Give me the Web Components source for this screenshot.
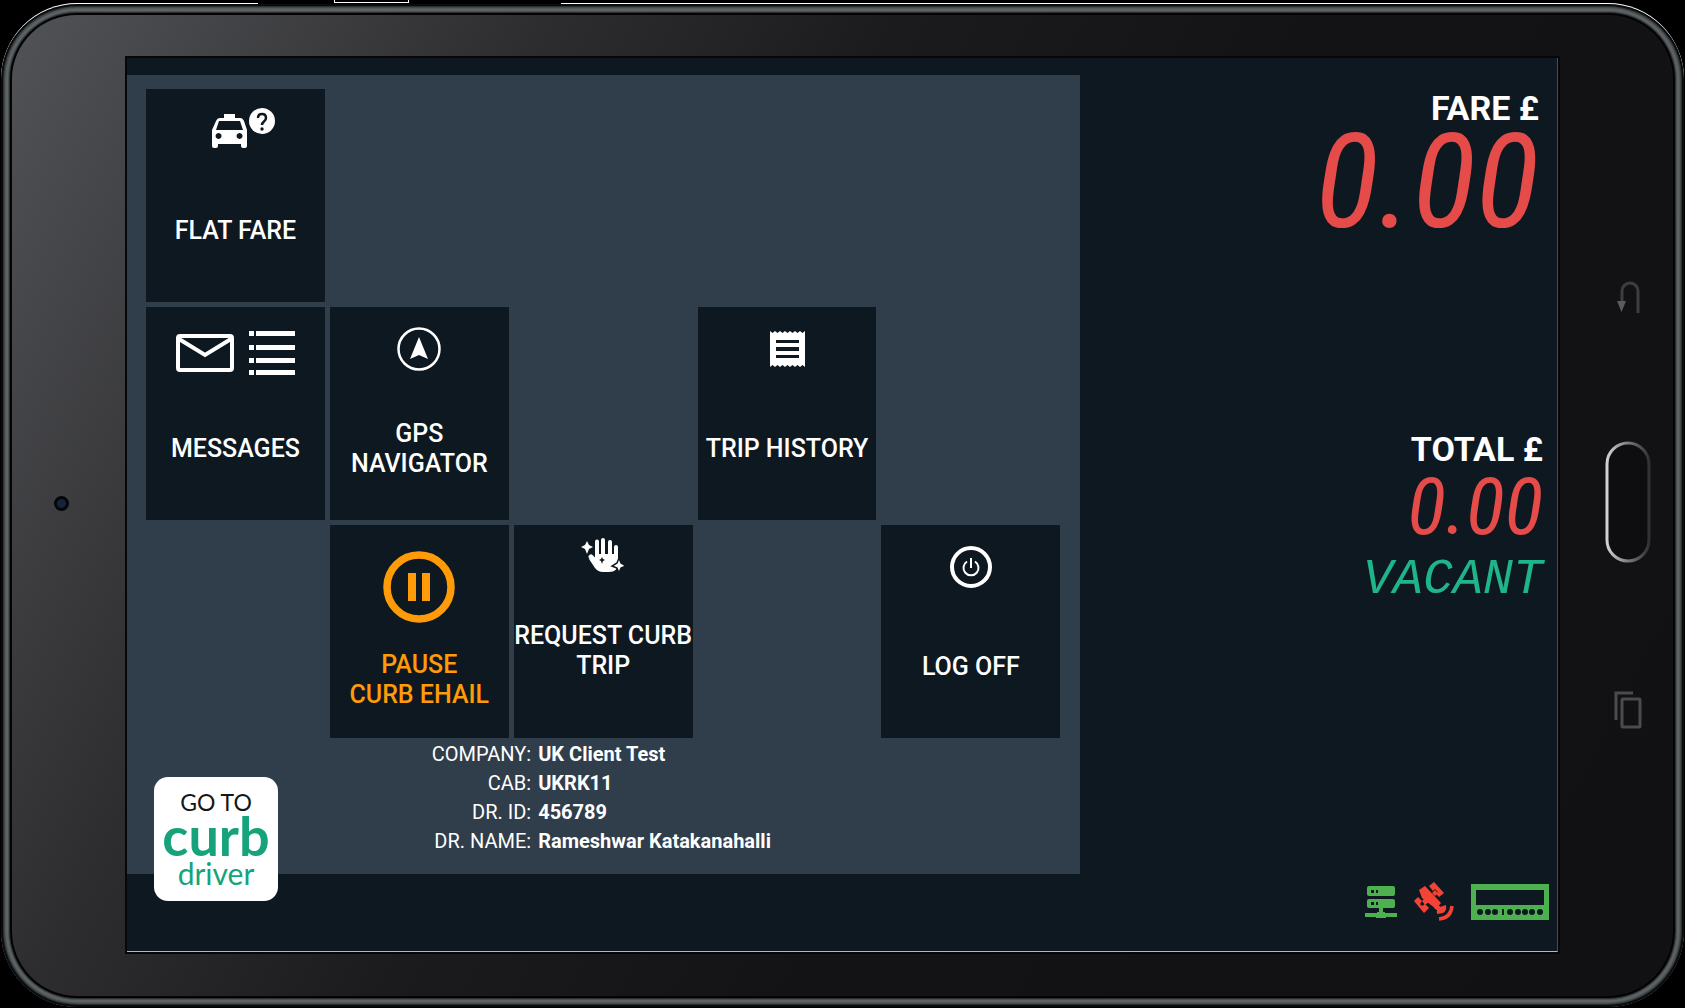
<!DOCTYPE html>
<html lang="en">
<head>
<meta charset="UTF-8">
<meta name="viewport" content="width=device-width, initial-scale=1.0">
<title>Curb Driver Tablet</title>
<style>
    body {
        margin: 0;
        background: #000;
        color: #fff;
        font-family: Roboto, "Open Sans", sans-serif;
    }
</style>
</head>
<body>
<tablet-device>
    <driver-menu slot="menu">
        <menu-tile style="grid-area: 1 / 1">
            <svg slot="icon" width="82" height="46" viewBox="-18 0 82 46">
                <path fill="#fff" fill-rule="evenodd" d="M12 6h11v4h5c2 0 3 1 4 3l3 9v16q0 2-2 2h-2q-2 0-2-2v-2H6v2q0 2-2 2H2q-2 0-2-2V22l4-9c1-2 2-3 4-3h4zM7 13L4 22h27l-3-9zM6.500 25a3 3 0 1 0 .1 0zM27.500 25a3 3 0 1 0 .1 0z"/>
                <circle cx="50" cy="13" r="13" fill="#fff"/>
                <path d="M46 10q0-4 4-4t4 4q0 2-2 3.500t-2 3.500" fill="none" stroke="#0e1821" stroke-width="2.500"/>
                <circle cx="50" cy="21" r="1.700" fill="#0e1821"/>
            </svg>
            FLAT FARE
        </menu-tile>
        <menu-tile style="grid-area: 2 / 1" class="tall">
            <svg slot="icon" width="119" height="46" viewBox="0 0 119 46">
                <rect x="2" y="5" width="54" height="34" rx="2" fill="none" stroke="#fff" stroke-width="4"/>
                <path d="M3 8l26 16L55 8" fill="none" stroke="#fff" stroke-width="4"/>
                <path fill="#fff" d="M73 0h5v5h-5zM80 0h39v5H80zM73 14h5v5h-5zM80 14h39v5H80zM73 27h5v5h-5zM80 27h39v5H80zM73 39h5v5h-5zM80 39h39v5H80z"/>
            </svg>
            MESSAGES
        </menu-tile>
        <menu-tile style="grid-area: 2 / 2">
            <svg slot="icon" width="44" height="44" viewBox="0 0 44 44">
                <circle cx="22" cy="22" r="20.500" fill="none" stroke="#fff" stroke-width="2.500"/>
                <path fill="#fff" d="M22 10l9 22-9-4-9 4z"/>
            </svg>
            GPS<br>NAVIGATOR
        </menu-tile>
        <menu-tile style="grid-area: 2 / 4">
            <svg slot="icon" width="35" height="38" viewBox="0 0 35 38">
                <path fill="#fff" fill-rule="evenodd" d="M0 1l2.500 2L5 1l2.500 2L10 1l2.500 2L15 1l2.500 2L20 1l2.500 2L25 1l2.500 2L30 1l2.500 2L35 1v36l-2.500-2-2.500 2-2.500-2-2.500 2-2.500-2-2.500 2-2.500-2-2.500 2-2.500-2-2.500 2-2.500-2L5 37l-2.500-2L0 37zM6 10v3h23v-3zM6 17v4h23v-4zM6 25v3h23v-3z"/>
            </svg>
            TRIP HISTORY
        </menu-tile>
        <menu-tile style="grid-area: 3 / 2" class="pause">
            <svg slot="icon" width="72" height="72" viewBox="0 0 72 72">
                <circle cx="36" cy="36" r="32" fill="none" stroke="#ff9a08" stroke-width="7.500"/>
                <path fill="#ff9a08" d="M25 22h8v28h-8zM39 22h8v28h-8z"/>
            </svg>
            PAUSE<br>CURB EHAIL
        </menu-tile>
        <menu-tile style="grid-area: 3 / 3" class="request">
            <svg slot="icon" width="44" height="36" viewBox="0 0 44 36">
                <g fill="none" stroke="#fff" stroke-width="4" stroke-linecap="round">
                    <path d="M16 20V4.500M22 18V3M29 18V5M35 20V10"/>
                    <path d="M10 20l7 7" stroke-width="5"/>
                </g>
                <path fill="#fff" d="M14 17h23v9q0 9-9 9h-6q-5 0-8-4l-6-9 6 1z"/>
                <path fill="#fff" d="M6 4l2 4 4 2-4 2-2 5-2-5-4-2 4-2z"/>
                <path fill="#fff" stroke="#0e1821" stroke-width="1.500" d="M38 21l2 5 5 3-5 2-2 5-2-5-5-2 5-3z"/>
                <path fill="#0e1821" d="M21 20l1 2 2 1-2 1-1 3-1-3-2-1 2-1z"/>
            </svg>
            REQUEST CURB<br>TRIP
        </menu-tile>
        <menu-tile style="grid-area: 3 / 5">
            <svg slot="icon" width="42" height="42" viewBox="0 0 42 42" fill="none" stroke="#fff">
                <circle cx="21" cy="21" r="19" stroke-width="4"/>
                <path d="M17 15.500a7.500 7.500 0 1 0 8 0" stroke-width="2"/>
                <path d="M21 12v10" stroke-width="2"/>
            </svg>
            LOG OFF
        </menu-tile>
        <driver-info slot="info"></driver-info>
    </driver-menu>
    <fare-meter slot="meter"></fare-meter>
    <curb-link slot="overlay"></curb-link>
</tablet-device>

<script>
class TabletDevice extends HTMLElement {
    connectedCallback() {
        this.attachShadow({ mode: 'open' });
        this.shadowRoot.innerHTML = `
            <style>
                :host {
                    display: block;
                    position: relative;
                    box-sizing: border-box;
                    min-height: 100vh;
                    padding: 3px 1px 1px;
                }
                /* power and volume keys on the top edge */
                .keys {
                    position: absolute;
                    top: 0;
                    left: 15.3%;
                    width: 18%;
                    height: 4px;
                    display: grid;
                    grid-template-columns: 25% 25% 50%;
                    background: #000;
                }
                .keys span:nth-child(2) {
                    height: 2px;
                    border: 1px solid #fff;
                    border-top: 0;
                }
                .body {
                    box-sizing: border-box;
                    min-height: calc(100vh - 4px);
                    display: grid;
                    grid-template-columns: 126px minmax(0, 1fr) 126px;
                    padding: 54px 0 55px;
                    border-radius: 76px;
                    border-top: 1px solid #fff;
                    background: linear-gradient(118deg, #535458, #2d2d2f 25%, #1b1b1d 41%, #131315 60%, #111113);
                    box-shadow:
                        inset 0 0 0 2px #0a0b0c,
                        inset 0 0 0 3px #2b2f31,
                        inset 0 0 0 4px #43484a,
                        inset 0 0 0 5px #545a5c,
                        inset 0 0 0 7px #5d6365,
                        inset 0 0 0 8px #4a4f51,
                        inset 0 0 0 9px #2b2f31,
                        inset 0 0 0 11px #030304;
                }
                .camera-side {
                    display: flex;
                    align-items: center;
                    justify-content: center;
                    padding: 0 5px 3px 0;
                }
                .camera {
                    width: 9px;
                    height: 9px;
                    border: 3px solid #05060a;
                    border-radius: 50%;
                    background: #15243a;
                }
                .screen {
                    position: relative;
                    display: grid;
                    grid-template-columns: 2fr 1fr;
                    background: #0e1821;
                    border-right: 1px solid #4a4e52;
                    border-bottom: 1px solid #b4b8ba;
                    box-shadow: 0 0 0 2px #060708;
                }
                nav {
                    display: flex;
                    flex-direction: column;
                    align-items: center;
                    justify-content: center;
                    gap: 128px;
                    padding-left: 14px;
                }
                button {
                    display: block;
                    padding: 0;
                    border: 0;
                    background: none;
                }
                svg { display: block; }
            </style>
            <div class="body">
                <div class="camera-side"><div class="camera"></div></div>
                <main class="screen">
                    <slot name="menu"></slot>
                    <slot name="meter"></slot>
                    <slot name="overlay"></slot>
                </main>
                <nav>
                    <button aria-label="Back">
                        <svg width="24" height="32" viewBox="0 0 24 32" fill="none" stroke="#46474a" stroke-width="3">
                            <path d="M6 21V10a8 8 0 0 1 16 0v22" stroke="#3d3e41"/>
                            <path d="M1 20h9L5.500 31z" fill="#5b5c60" stroke="none"/>
                        </svg>
                    </button>
                    <button aria-label="Home">
                        <svg width="46" height="122" viewBox="0 0 46 122">
                            <defs>
                                <linearGradient id="metal">
                                    <stop offset="0" stop-color="#d0d1d3"/>
                                    <stop offset=".5" stop-color="#7b7c7e"/>
                                    <stop offset="1" stop-color="#303134"/>
                                </linearGradient>
                            </defs>
                            <rect x="2" y="2" width="42" height="118" rx="21" fill="#0e0e10" stroke="url(#metal)" stroke-width="3"/>
                        </svg>
                    </button>
                    <button aria-label="Recent apps">
                        <svg width="28" height="38" viewBox="0 0 28 38" fill="none" stroke="#4a4b4e" stroke-width="3">
                            <path d="M2 29V2h17"/>
                            <rect x="8" y="8" width="18" height="28" rx="1"/>
                        </svg>
                    </button>
                </nav>
            </div>
            <div class="keys"><span></span><span></span><span></span></div>
        `;
    }
}

class DriverMenu extends HTMLElement {
    connectedCallback() {
        this.attachShadow({ mode: 'open' });
        this.shadowRoot.innerHTML = `
            <style>
                :host {
                    display: flex;
                    flex-direction: column;
                    min-width: 0;
                    margin: 17px 0 77px;
                    padding: 14px 20px 12px 19px;
                    background: #303d4a;
                }
                .tiles {
                    display: grid;
                    grid-template-columns: repeat(5, minmax(0, 1fr));
                    grid-auto-rows: 213px;
                    gap: 5px;
                }
            </style>
            <div class="tiles"><slot></slot></div>
            <slot name="info"></slot>
        `;
    }
}

class MenuTile extends HTMLElement {
    connectedCallback() {
        this.attachShadow({ mode: 'open' });
        this.shadowRoot.innerHTML = `
            <style>
                :host {
                    display: block;
                    --icon-area: 84px;
                    --icon-gap: 28px;
                }
                :host(.tall) {
                    --icon-area: 94px;
                    --icon-gap: 18px;
                }
                :host(.pause) {
                    --icon-area: 124px;
                    --icon-gap: 1px;
                    color: #ff9a08;
                }
                :host(.request) {
                    --icon-area: 60px;
                    --icon-gap: 36px;
                }
                button {
                    width: 100%;
                    height: 100%;
                    display: grid;
                    grid-template-rows: var(--icon-area) 60px;
                    row-gap: var(--icon-gap);
                    align-content: start;
                    place-items: center;
                    padding: 0;
                    border: 0;
                    background: #0e1821;
                    color: inherit;
                    font: 500 25px/30px Roboto, sans-serif;
                    white-space: nowrap;
                }
            </style>
            <button>
                <slot name="icon"></slot>
                <span><slot></slot></span>
            </button>
        `;
    }
}

class DriverInfo extends HTMLElement {
    connectedCallback() {
        this.attachShadow({ mode: 'open' });
        this.shadowRoot.innerHTML = `
            <style>
                :host { display: block; }
                dl {
                    display: grid;
                    grid-template-columns: 42% 1fr;
                    column-gap: 7px;
                    margin: 0;
                    padding: 2px 0 0 2px;
                    font-size: 20px;
                    line-height: 29px;
                }
                dt { text-align: right; }
                dd {
                    margin: 0;
                    font-weight: 700;
                }
            </style>
            <dl>
                <dt>COMPANY:</dt><dd>UK Client Test</dd>
                <dt>CAB:</dt><dd>UKRK11</dd>
                <dt>DR. ID:</dt><dd>456789</dd>
                <dt>DR. NAME:</dt><dd>Rameshwar Katakanahalli</dd>
            </dl>
        `;
    }
}

class FareMeter extends HTMLElement {
    connectedCallback() {
        this.attachShadow({ mode: 'open' });
        this.shadowRoot.innerHTML = `
            <style>
                :host {
                    display: flex;
                    flex-direction: column;
                    padding-top: 30px;
                    text-align: right;
                }
                section { padding-right: 14px; }
                .fare { padding-right: 18px; }
                .total { margin-top: 193px; }
                h2 {
                    margin: 0;
                    font-size: 34px;
                    line-height: 40px;
                    font-weight: 700;
                }
                p { margin: 0; }
                .digits {
                    color: #e54b48;
                    font-family: "Roboto Condensed", "Liberation Sans Narrow", Roboto, sans-serif;
                    font-style: italic;
                    font-size: 80px;
                    line-height: 76px;
                }
                .fare .digits {
                    font-size: 132px;
                    line-height: 108px;
                }
                .status {
                    margin-top: 11px;
                    color: #1fb489;
                    font: italic 50px/48px "Liberation Mono", monospace;
                }
                footer {
                    display: flex;
                    align-items: center;
                    justify-content: flex-end;
                    gap: 17px;
                    margin-top: auto;
                    padding: 0 8px 29px 0;
                }
            </style>
            <section class="fare">
                <h2>FARE £</h2>
                <p class="digits">0.00</p>
            </section>
            <section class="total">
                <h2>TOTAL £</h2>
                <p class="digits">0.00</p>
                <p class="status">VACANT</p>
            </section>
            <footer>
                <svg width="32" height="34" viewBox="0 0 32 34" role="img" aria-label="Server connected">
                    <rect x="2" y="1" width="28" height="10" rx="2" fill="#4db150"/>
                    <rect x="2" y="14" width="28" height="9" rx="2" fill="#4db150"/>
                    <path fill="#4db150" d="M14 23h4v4h2v1h12v4H21v1H11v-1H0v-4h12v-1h2z"/>
                    <path fill="#0e1821" d="M6 5h3v3H6zM11 5h2v3h-2zM6 17h3v3H6zM11 17h2v3h-2z"/>
                </svg>
                <svg width="40" height="40" viewBox="0 0 40 40" role="img" aria-label="No GPS signal">
                    <g fill="#f44336">
                        <path d="M5 8l6-4 16 17-5 6L8 16z"/>
                        <path d="M15 4l5-4 10 11-5 4-3-3 2-2-3-3-2 2zM0 19l4-4 4 4-2 3 2 2 3-2 4 4-5 5z"/>
                        <path d="M18 11l3-3 3 3-3 3zM8 19l4-4 4 4-5 4zM22 22l5 3-3 4-4-3z"/>
                        <path d="M23 32q-1-5 3-7l6-2q1 6-3 8z"/>
                    </g>
                    <path d="M25 37q12-1 13-13" fill="none" stroke="#f44336" stroke-width="3.500"/>
                </svg>
                <svg width="78" height="36" viewBox="0 0 78 36" role="img" aria-label="Meter connected">
                    <path fill="#4db150" fill-rule="evenodd" d="M0 0h78v36H0zM5 6v15h68V6z"/>
                    <g fill="#0e1821">
                        <circle cx="9" cy="28" r="3"/><circle cx="17" cy="28" r="3"/><circle cx="24" cy="28" r="3"/>
                        <path d="M31 25h2v6h-2z"/>
                        <circle cx="39" cy="28" r="3"/><circle cx="47" cy="28" r="3"/><circle cx="54" cy="28" r="3"/>
                        <circle cx="61" cy="28" r="3"/><circle cx="69" cy="28" r="3"/>
                    </g>
                </svg>
            </footer>
        `;
    }
}

class CurbLink extends HTMLElement {
    connectedCallback() {
        this.attachShadow({ mode: 'open' });
        this.shadowRoot.innerHTML = `
            <style>
                :host {
                    position: absolute;
                    left: 27px;
                    bottom: 50px;
                }
                a {
                    width: 124px;
                    height: 124px;
                    box-sizing: border-box;
                    padding-top: 11px;
                    display: flex;
                    flex-direction: column;
                    align-items: center;
                    border-radius: 14px;
                    background: #fff;
                    color: #16a37b;
                    font-family: Lato, sans-serif;
                    text-decoration: none;
                }
                .go {
                    color: #161616;
                    font-size: 23px;
                    line-height: 28px;
                }
                .brand {
                    font-size: 54px;
                    line-height: 40px;
                    font-weight: 700;
                }
                .app {
                    font-size: 30px;
                    line-height: 34px;
                }
            </style>
            <a href="#driver">
                <span class="go">GO TO</span>
                <span class="brand">curb</span>
                <span class="app">driver</span>
            </a>
        `;
    }
}

customElements.define('tablet-device', TabletDevice);
customElements.define('driver-menu', DriverMenu);
customElements.define('menu-tile', MenuTile);
customElements.define('driver-info', DriverInfo);
customElements.define('fare-meter', FareMeter);
customElements.define('curb-link', CurbLink);
</script>
</body>
</html>
